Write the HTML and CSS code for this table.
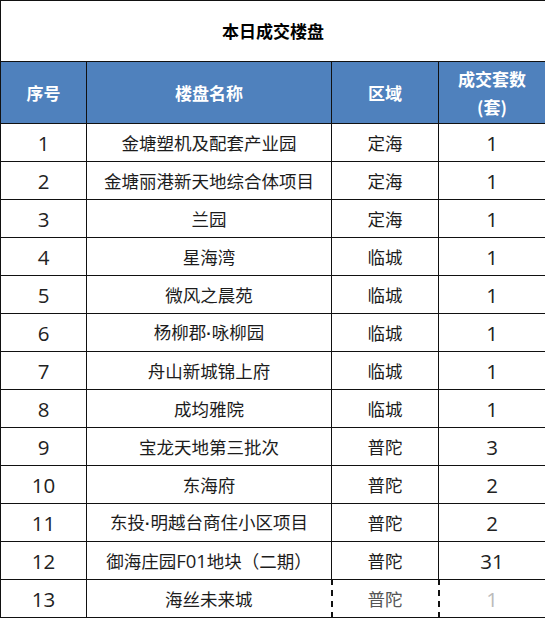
FILE: index.html
```html
<!DOCTYPE html>
<html lang="zh">
<head>
<meta charset="utf-8">
<link rel="stylesheet" href="styles.css">
</head>
<body>
<table class="deals">
  <colgroup>
    <col class="c-no"><col class="c-name"><col class="c-area"><col class="c-count">
  </colgroup>
  <tr class="title-row"><td colspan="4">本日成交楼盘</td></tr>
  <tr class="head-row">
    <th>序号</th><th>楼盘名称</th><th>区域</th><th>成交套数<br>(套)</th>
  </tr>
  <tr><td class="num">1</td><td>金塘塑机及配套产业园</td><td>定海</td><td class="num">1</td></tr>
  <tr><td class="num">2</td><td>金塘丽港新天地综合体项目</td><td>定海</td><td class="num">1</td></tr>
  <tr><td class="num">3</td><td>兰园</td><td>定海</td><td class="num">1</td></tr>
  <tr><td class="num">4</td><td>星海湾</td><td>临城</td><td class="num">1</td></tr>
  <tr><td class="num">5</td><td>微风之晨苑</td><td>临城</td><td class="num">1</td></tr>
  <tr><td class="num">6</td><td>杨柳郡<span class="dot">·</span>咏柳园</td><td>临城</td><td class="num">1</td></tr>
  <tr><td class="num">7</td><td>舟山新城锦上府</td><td>临城</td><td class="num">1</td></tr>
  <tr><td class="num">8</td><td>成均雅院</td><td>临城</td><td class="num">1</td></tr>
  <tr><td class="num">9</td><td>宝龙天地第三批次</td><td>普陀</td><td class="num">3</td></tr>
  <tr><td class="num">10</td><td>东海府</td><td>普陀</td><td class="num">2</td></tr>
  <tr><td class="num">11</td><td>东投<span class="dot">·</span>明越台商住小区项目</td><td>普陀</td><td class="num">2</td></tr>
  <tr><td class="num">12</td><td>御海庄园<span class="latin">F01</span>地块（二期）</td><td>普陀</td><td class="num">31</td></tr>
  <tr class="last-row"><td class="num">13</td><td class="dash-right">海丝未来城</td><td class="faded">普陀</td><td class="num faded faint">1</td></tr>
</table>
</body>
</html>
```

FILE: styles.css
```css
html, body {
  margin: 0;
  padding: 0;
  background: #ffffff;
}
body {
  font-family: "Noto Sans CJK SC", "Noto Sans", sans-serif;
  color: #1c1c1c;
}
.deals {
  border-collapse: collapse;
  table-layout: fixed;
  width: 545px;
  margin: 0;
}
.c-no { width: 86px; }
.c-name { width: 245px; }
.c-area { width: 107px; }
.c-count { width: 107px; }
.deals td, .deals th {
  border: 1.5px solid #111;
  text-align: center;
  padding: 0;
  font-size: 17.5px;
  line-height: 22px;
  font-weight: 400;
}
.deals td.num {
  font-family: "Open Sans", "Noto Sans", sans-serif;
  font-size: 20.5px;
  color: #222;
}
.dot {
  font-family: "Liberation Sans", sans-serif;
  font-weight: 700;
  font-size: 16px;
}
.latin {
  font-family: "Open Sans", sans-serif;
  font-size: 18.5px;
}
.deals tr { height: 38px; }
.title-row { height: 61px !important; }
.title-row td {
  font-weight: 700;
  font-size: 17px;
  color: #000;
  border-bottom: 1.5px solid #111;
}
.head-row { height: 62px !important; }
.head-row th {
  background: #4f81bd;
  color: #ffffff;
  font-weight: 700;
  font-size: 17px;
  line-height: 28px;
}
.last-row td.dash-right {
  border-right: 2px dashed #111;
}
.last-row td.faded {
  border-left: 2px dashed #111;
  border-right: 2px dashed #111;
  color: #555;
}
.last-row td.faint {
  color: #bbb;
}
```
